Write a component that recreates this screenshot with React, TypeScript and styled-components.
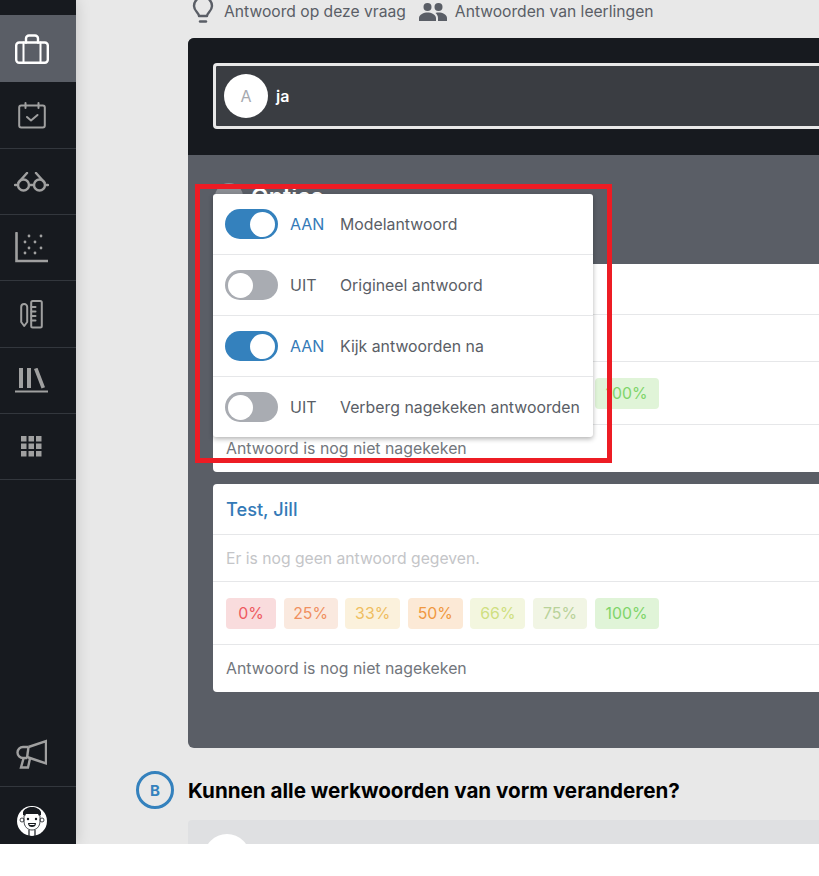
import React from 'react';
import styled, { createGlobalStyle } from 'styled-components';

const Global = createGlobalStyle`
  html, body {
    margin: 0;
    padding: 0;
    background: #fff;
  }
  * { box-sizing: border-box; }
`;

const Viewport = styled.div`
  width: 819px;
  height: 876px;
  overflow: hidden;
  background: #fff;
  font-family: Inter, 'Noto Sans', sans-serif;
`;

const Frame = styled.div`
  display: flex;
  width: 819px;
  height: 844px;
  overflow: hidden;
  background: #e8e8e8;
`;

const Sidebar = styled.nav`
  flex: 0 0 76px;
  display: flex;
  flex-direction: column;
  background: #171a1f;
  padding-top: 15px;
  position: relative;
  z-index: 2;
  box-shadow: 0 0 14px rgba(0, 0, 0, 0.16);
`;

const NavItem = styled.div<{ $active?: boolean; $h: number; $line?: boolean }>`
  height: ${(p) => p.$h}px;
  display: flex;
  align-items: center;
  justify-content: center;
  padding-right: 13px;
  color: ${(p) => (p.$active ? '#fff' : '#a0a0a0')};
  background: ${(p) => (p.$active ? '#5a5e66' : 'transparent')};
  border-bottom: ${(p) => (p.$line ? '1px solid #33373d' : 'none')};
`;

const AvatarItem = styled(NavItem)`
  align-items: flex-start;
  padding-top: 19px;
`;

const NavSpacer = styled.div`
  flex: 1;
`;

const Main = styled.main`
  flex: 1;
  min-width: 0;
  padding-left: 112px;
  overflow: hidden;
`;

const Tabs = styled.div`
  height: 38px;
  display: flex;
  align-items: flex-start;
  padding-left: 4px;
  color: #5a5e66;
  font-size: 15.65px;
`;

const Tab = styled.div`
  display: flex;
  align-items: center;
  gap: 10px;
  height: 23px;
  margin-right: 13px;
  white-space: nowrap;
`;

const Panel = styled.section`
  width: 680px;
  height: 710px;
  border-radius: 6px 0 0 6px;
  background: #5a5e66;
  overflow: hidden;
  position: relative;
`;

const PanelHead = styled.div`
  height: 117px;
  background: #171a1f;
  padding: 25px 0 0 25px;
`;

const AnswerBox = styled.div`
  height: 66px;
  width: 640px;
  border: 3px solid #e8e8e8;
  border-right: none;
  border-radius: 4px 0 0 4px;
  background: #3a3d42;
  display: flex;
  align-items: center;
  padding-left: 8px;
  gap: 8px;
  color: #fff;
  font-weight: 600;
  font-size: 16px;
`;

const LetterDisc = styled.div`
  width: 44px;
  height: 44px;
  border-radius: 50%;
  background: #fff;
  color: #a6a9af;
  font-size: 16px;
  font-weight: 400;
  display: flex;
  align-items: center;
  justify-content: center;
`;

const PanelBody = styled.div`
  padding: 0 0 0 25px;
`;

const OptionsHead = styled.div`
  height: 109px;
  display: flex;
  align-items: flex-start;
  padding: 28px 0 0 2px;
  gap: 8px;
  color: #fff;
  font-size: 23px;
  line-height: 28px;
  font-weight: 600;
`;

const OptionsDot = styled.div`
  width: 28px;
  height: 28px;
  border-radius: 50%;
  background: #8a8d93;
`;

const Card = styled.article`
  width: 620px;
  background: #fff;
  border-radius: 4px 0 0 4px;
  margin-bottom: 12px;
`;

const CardRow = styled.div<{ $h: number }>`
  height: ${(p) => p.$h}px;
  display: flex;
  align-items: center;
  padding-left: 13px;
  border-bottom: 1px solid #e6e7e9;
  &:last-child {
    border-bottom: none;
  }
`;

const Name = styled.div`
  color: #347ab7;
  font-size: 18.2px;
  font-weight: 500;
`;

const Muted = styled.div`
  color: #c4c5c8;
  font-size: 15.7px;
`;

const Status = styled.div`
  color: #72767c;
  font-size: 15.85px;
`;

const Scores = styled.div`
  display: flex;
  gap: 7.6px;
`;

const Score = styled.div<{ $w: number; $bg: string; $fg: string }>`
  height: 31px;
  width: ${(p) => p.$w}px;
  border-radius: 4px;
  display: flex;
  align-items: center;
  justify-content: center;
  font-size: 15.85px;
  background: ${(p) => p.$bg};
  color: ${(p) => p.$fg};
`;

const Menu = styled.div`
  position: absolute;
  left: 25px;
  top: 156px;
  width: 380px;
  background: #fff;
  border-radius: 3px;
  box-shadow: 0 2px 5px rgba(0, 0, 0, 0.3);
  z-index: 3;
`;

const MenuRow = styled.div`
  height: 61px;
  display: flex;
  align-items: center;
  padding-left: 12px;
  border-bottom: 1px solid #e6e7e9;
  &:last-child {
    height: 60px;
    border-bottom: none;
  }
`;

const Switch = styled.div<{ $on: boolean }>`
  width: 53px;
  height: 30px;
  border-radius: 15px;
  background: ${(p) => (p.$on ? '#3481bd' : '#a9acb2')};
  display: flex;
  align-items: center;
  justify-content: ${(p) => (p.$on ? 'flex-end' : 'flex-start')};
  padding: 0 3px;
  &::after {
    content: '';
    width: 25px;
    height: 25px;
    border-radius: 50%;
    background: #fff;
  }
`;

const SwitchState = styled.span<{ $on: boolean }>`
  flex: 0 0 62px;
  padding-left: 12px;
  color: ${(p) => (p.$on ? '#347ab7' : '#5a5e66')};
  font-size: 16px;
`;

const MenuLabel = styled.span`
  color: #5a5e66;
  font-size: 15.85px;
  white-space: nowrap;
`;

const Highlight = styled.div`
  position: absolute;
  left: 7px;
  top: 146px;
  width: 417px;
  height: 279px;
  border: 5px solid #ed1c24;
  z-index: 4;
  pointer-events: none;
`;

const NextQuestion = styled.div`
  display: flex;
  align-items: center;
  height: 72px;
  padding-top: 12px;
  margin-left: -52px;
  gap: 14px;
  font-size: 20.6px;
  font-weight: 700;
  color: #000;
  white-space: nowrap;
`;

const Bubble = styled.div`
  width: 38px;
  height: 38px;
  border-radius: 50%;
  border: 3px solid #3481bd;
  color: #3481bd;
  font-size: 15px;
  font-weight: 700;
  display: flex;
  align-items: center;
  justify-content: center;
`;

const NextAnswer = styled.div`
  width: 680px;
  height: 60px;
  background: #dfe0e2;
  border-radius: 4px 0 0 0;
  padding: 14px 0 0 16px;
`;

const NextDisc = styled.div`
  width: 46px;
  height: 46px;
  border-radius: 50%;
  background: #fff;
`;

const stroke = {
  fill: 'none',
  stroke: 'currentColor',
  strokeWidth: 2,
  strokeLinecap: 'round' as const,
  strokeLinejoin: 'round' as const,
};

const Briefcase = () => (
  <svg width="34" height="30" viewBox="0 0 34 30" {...stroke}>
    <rect x="1.2" y="8.5" width="31.6" height="20.3" rx="3" strokeWidth="2.4" />
    <path d="M11 8.5V4.5a3 3 0 0 1 3-3h6a3 3 0 0 1 3 3v4" strokeWidth="2.4" />
    <path d="M8.5 8.5v20M25.5 8.5v20" />
  </svg>
);

const CalendarCheck = () => (
  <svg width="28" height="27" viewBox="0 0 28 27" {...stroke}>
    <rect x="1.2" y="3.5" width="25.6" height="22" rx="2" />
    <path d="M7.5 1v5M20.5 1v5M9 15l4 3.5 6.5-5.5" />
  </svg>
);

const Glasses = () => (
  <svg width="35" height="20" viewBox="0 0 35 20" {...stroke} strokeWidth="2.4">
    <circle cx="9.5" cy="13" r="5.5" />
    <circle cx="25.5" cy="13" r="5.5" />
    <path d="M1 13h3M15 13h5M31 13h3M13 1L4.5 10.5M22 1l8.5 9.5" />
  </svg>
);

const Scatter = () => (
  <svg width="33" height="31" viewBox="0 0 33 31">
    <path d="M1.5 1v28h31" fill="none" stroke="currentColor" strokeWidth="2.6" strokeLinecap="round" />
    {[
      [14, 4], [26, 4], [10, 10], [20, 10], [14, 16], [26, 16], [10, 21], [20, 21],
    ].map(([x, y]) => (
      <circle key={`${x}-${y}`} cx={x} cy={y} r="1.4" fill="currentColor" />
    ))}
  </svg>
);

const Tools = () => (
  <svg width="23" height="29" viewBox="0 0 23 29" {...stroke}>
    <path d="M1.2 7a3 3 0 0 1 6 0v15l-3 4-3-4z" />
    <rect x="11.2" y="1" width="10.6" height="26.5" rx="1.5" />
    <path d="M11.5 7h4M11.5 11.5h4M11.5 16h4M11.5 20.5h4" />
  </svg>
);

const Library = () => (
  <svg width="33" height="25" viewBox="0 0 33 25">
    <path d="M4 0h4v20H4zM12 0h4v20h-4zM19 1l3.500-1.200 7.500 19.500-3.500 1.200z" fill="currentColor" />
    <path d="M0 23.500h33" stroke="currentColor" strokeWidth="2" />
  </svg>
);

const Grid = () => (
  <svg width="21" height="21" viewBox="0 0 21 21" fill="currentColor">
    {[0, 7.5, 15].flatMap((y) =>
      [0, 7.5, 15].map((x) => <rect key={`${x}-${y}`} x={x} y={y} width="5.5" height="5.5" />)
    )}
  </svg>
);

const Megaphone = () => (
  <svg width="31" height="30" viewBox="0 0 31 30" fill="none" stroke="currentColor" strokeWidth="2.4">
    <path d="M12.500 8L30 2v22.500L11 18" />
    <path d="M12.500 8H7a5.500 5.500 0 0 0 0 11h4" />
    <path d="M12.500 8L11 19" />
    <path d="M7.500 19.500L5 28.500h7l2-9" />
  </svg>
);

const Mascot = () => (
  <svg width="30" height="30" viewBox="0 0 30 30">
    <circle cx="15" cy="15" r="15" fill="#fff" />
    <path d="M6 9V6c1-3 5-5 9-5s8 2 9 5v3l-2 1-1-2H9l-1 2z" fill="#171a1f" />
    <path d="M7 10v5c0 6 4 9 8 9s8-3 8-9v-5" fill="none" stroke="#171a1f" strokeWidth="0.800" />
    <circle cx="5" cy="14" r="2" fill="none" stroke="#171a1f" strokeWidth="0.800" />
    <circle cx="25" cy="14" r="2" fill="none" stroke="#171a1f" strokeWidth="0.800" />
    <circle cx="11" cy="13" r="1.200" fill="#171a1f" />
    <circle cx="19" cy="13" r="1.200" fill="#171a1f" />
    <path d="M11 17h8c0 3-2 4-4 4s-4-1-4-4z" fill="#171a1f" />
    <path d="M12.500 18h5v1h-5z" fill="#fff" />
    <path d="M12 24v6M18 24v6" stroke="#171a1f" strokeWidth="1.200" />
  </svg>
);

const Bulb = () => (
  <svg width="22" height="24" viewBox="0 0 22 24" {...stroke} strokeWidth="2.4" style={{ marginTop: '-1px' }}>
    <path d="M7 17c0-3-5-5-5-10a9 9 0 0 1 18 0c0 5-5 7-5 10z" />
    <path d="M8 22.500h6" />
  </svg>
);

const People = () => (
  <svg width="28" height="18" viewBox="0 0 28 18" fill="currentColor" style={{ marginRight: '-2px' }}>
    <circle cx="8.500" cy="4" r="4" />
    <circle cx="19.500" cy="4" r="4" />
    <path d="M0 18v-3c0-3.500 5-5.500 8.500-5.500S17 11.500 17 15v3zM19 18v-3c0-2-1-3.800-2.500-5 1-.4 2-.5 3-.5 4 0 8.500 2 8.500 5.500v3z" />
  </svg>
);

const scores = [
  { label: '0%', w: 50, bg: '#f9dcdd', fg: '#ee5a60' },
  { label: '25%', w: 54, bg: '#fae9df', fg: '#f0905f' },
  { label: '33%', w: 55, bg: '#fbf1dc', fg: '#efbe62' },
  { label: '50%', w: 55, bg: '#fce9d6', fg: '#f09840' },
  { label: '66%', w: 55, bg: '#f3f6df', fg: '#cfdf80' },
  { label: '75%', w: 54, bg: '#f1f5e4', fg: '#b9d29a' },
  { label: '100%', w: 64, bg: '#e0f4d8', fg: '#7fd56a' },
];

const options = [
  { on: true, label: 'Modelantwoord' },
  { on: false, label: 'Origineel antwoord' },
  { on: true, label: 'Kijk antwoorden na' },
  { on: false, label: 'Verberg nagekeken antwoorden' },
];

const StudentCard = ({ name }: { name: string }) => (
  <Card>
    <CardRow $h={51}>
      <Name>{name}</Name>
    </CardRow>
    <CardRow $h={47}>
      <Muted>Er is nog geen antwoord gegeven.</Muted>
    </CardRow>
    <CardRow $h={63}>
      <Scores>
        {scores.map((s) => (
          <Score key={s.label} $w={s.w} $bg={s.bg} $fg={s.fg}>
            {s.label}
          </Score>
        ))}
      </Scores>
    </CardRow>
    <CardRow $h={47}>
      <Status>Antwoord is nog niet nagekeken</Status>
    </CardRow>
  </Card>
);

export default function App() {
  return (
    <Viewport>
      <Global />
      <Frame>
        <Sidebar>
          <NavItem $active $h={67}>
            <Briefcase />
          </NavItem>
          <NavItem $h={67} $line>
            <CalendarCheck />
          </NavItem>
          <NavItem $h={66} $line>
            <Glasses />
          </NavItem>
          <NavItem $h={66} $line>
            <Scatter />
          </NavItem>
          <NavItem $h={67} $line>
            <Tools />
          </NavItem>
          <NavItem $h={66} $line>
            <Library />
          </NavItem>
          <NavItem $h={66} $line>
            <Grid />
          </NavItem>
          <NavSpacer />
          <NavItem $h={66} $line>
            <Megaphone />
          </NavItem>
          <AvatarItem $h={57}>
            <Mascot />
          </AvatarItem>
        </Sidebar>
        <Main>
          <Tabs>
            <Tab>
              <Bulb />
              Antwoord op deze vraag
            </Tab>
            <Tab>
              <People />
              Antwoorden van leerlingen
            </Tab>
          </Tabs>
          <Panel>
            <PanelHead>
              <AnswerBox>
                <LetterDisc>A</LetterDisc>
                ja
              </AnswerBox>
            </PanelHead>
            <PanelBody>
              <OptionsHead>
                <OptionsDot />
                Opties
              </OptionsHead>
              <StudentCard name="Test, Jack" />
              <StudentCard name="Test, Jill" />
            </PanelBody>
            <Menu>
              {options.map((o) => (
                <MenuRow key={o.label}>
                  <Switch $on={o.on} />
                  <SwitchState $on={o.on}>{o.on ? 'AAN' : 'UIT'}</SwitchState>
                  <MenuLabel>{o.label}</MenuLabel>
                </MenuRow>
              ))}
            </Menu>
            <Highlight />
          </Panel>
          <NextQuestion>
            <Bubble>B</Bubble>
            Kunnen alle werkwoorden van vorm veranderen?
          </NextQuestion>
          <NextAnswer>
            <NextDisc />
          </NextAnswer>
        </Main>
      </Frame>
    </Viewport>
  );
}
